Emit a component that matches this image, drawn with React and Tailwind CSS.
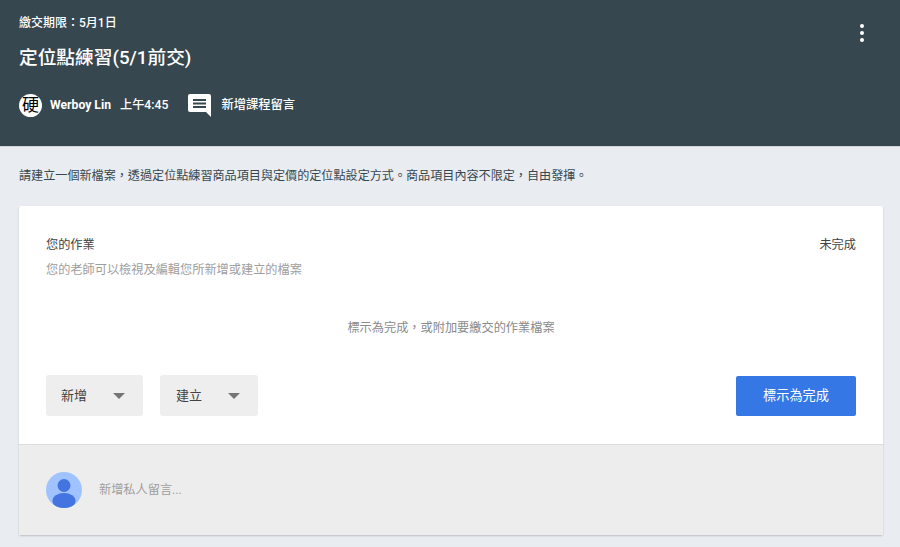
import React from "react";

// bulle de commentaire
const CommentIcon = () => (
  <svg width="23" height="23" viewBox="0 0 23 23" className="block">
    <path d="M2 0h19a2 2 0 0 1 2 2v21l-5-5H2a2 2 0 0 1-2-2V2a2 2 0 0 1 2-2z" fill="#fff" />
    <path d="M5 5h13v2H5zM5 8.500h13v2H5zM5 12h13v2H5z" fill="#37474f" />
  </svg>
);

const Caret = () => (
  <span className="w-0 h-0 border-l-[6px] border-r-[6px] border-t-[6px] border-l-transparent border-r-transparent border-t-[#757575]" />
);

const SelectBtn = ({ label, className }) => (
  <div className={`${className} h-[41px] bg-[#eeeeee] rounded-[3px] flex items-center justify-between pr-[18px] text-[13px] text-[#424242]`}>
    <span>{label}</span>
    <Caret />
  </div>
);

export default function App() {
  return (
    <div lang="zh-Hant" className="w-[900px] h-[547px] overflow-hidden bg-[#e9edf1] font-['Roboto','Noto_Sans_CJK_TC',sans-serif]">
      {/* entête */}
      <header className="h-[147px] bg-[#37474f] border-b border-b-[#cfd4d8] text-white pl-[19px] pr-[36px] pt-[15px] flex justify-between">
        <div>
          <div className="text-[12px] leading-[16px] font-medium">繳交期限：5月1日</div>
          <h1 className="mt-[12px] text-[18.7px] leading-[30px] font-medium">定位點練習(5/1前交)</h1>
          <div className="mt-[19px] flex items-center h-[26px]">
            <div className="w-[23px] h-[23px] rounded-full bg-white text-black text-[17px] leading-[23px] text-center overflow-hidden">硬</div>
            <span className="ml-[8px] text-[12.2px] font-bold">Werboy Lin</span>
            <span className="ml-[9px] text-[12.2px] font-medium">上午4:45</span>
            <span className="ml-[20px]"><CommentIcon /></span>
            <span className="ml-[10px] text-[12.3px] font-medium">新增課程留言</span>
          </div>
        </div>
        <div className="flex flex-col gap-[3px] pt-[9px]">
          <span className="w-[4px] h-[4px] rounded-full bg-white" />
          <span className="w-[4px] h-[4px] rounded-full bg-white" />
          <span className="w-[4px] h-[4px] rounded-full bg-white" />
        </div>
      </header>

      <main className="px-[19px]">
        <p className="pt-[19px] h-[59px] text-[12.1px] leading-[18px] text-[#37474f] font-['Noto_Sans_CJK_TC',sans-serif]">
          請建立一個新檔案，透過定位點練習商品項目與定價的定位點設定方式。商品項目內容不限定，自由發揮。
        </p>

        <section className="w-[864px] bg-white shadow-[0_1px_2px_rgba(0,0,0,0.2)] rounded-[2px]">
          <div className="h-[239px] border-b border-b-[#dcdcdc] px-[27px] pt-[29px]">
            <div className="flex justify-between text-[12.2px] leading-[18px] text-[#424242]">
              <span className="pt-[1px]">您的作業</span>
              <span className="pt-[1px]">未完成</span>
            </div>
            <div className="mt-[7px] text-[12.2px] leading-[18px] text-[#9e9e9e]">
              您的老師可以檢視及編輯您所新增或建立的檔案
            </div>
            <div className="mt-[40px] text-center text-[12.2px] leading-[18px] text-[#8a8a8a]">
              標示為完成，或附加要繳交的作業檔案
            </div>
            <div className="mt-[38px] flex items-center">
              <SelectBtn label="新增" className="w-[97px] pl-[15px]" />
              <div className="ml-[17px]"><SelectBtn label="建立" className="w-[98px] pl-[16px]" /></div>
              <button className="ml-auto w-[120px] h-[40px] bg-[#3578e5] rounded-[2px] text-white text-[13.2px]">
                標示為完成
              </button>
            </div>
          </div>

          <div className="h-[90px] bg-[#eeeded] flex items-center px-[27px]">
            <svg width="36" height="36" viewBox="0 0 36 36" className="shrink-0">
              <defs>
                <clipPath id="c"><circle cx="18" cy="18" r="18" /></clipPath>
              </defs>
              <circle cx="18" cy="18" r="18" fill="#a0c3ff" />
              <g clipPath="url(#c)">
                <circle cx="18" cy="13.500" r="6.500" fill="#4374e0" />
                <ellipse cx="18" cy="29" rx="11.500" ry="8" fill="#4374e0" />
              </g>
            </svg>
            <span className="ml-[17px] text-[12.2px] text-[#9e9e9e]">新增私人留言...</span>
          </div>
        </section>
      </main>
    </div>
  );
}
